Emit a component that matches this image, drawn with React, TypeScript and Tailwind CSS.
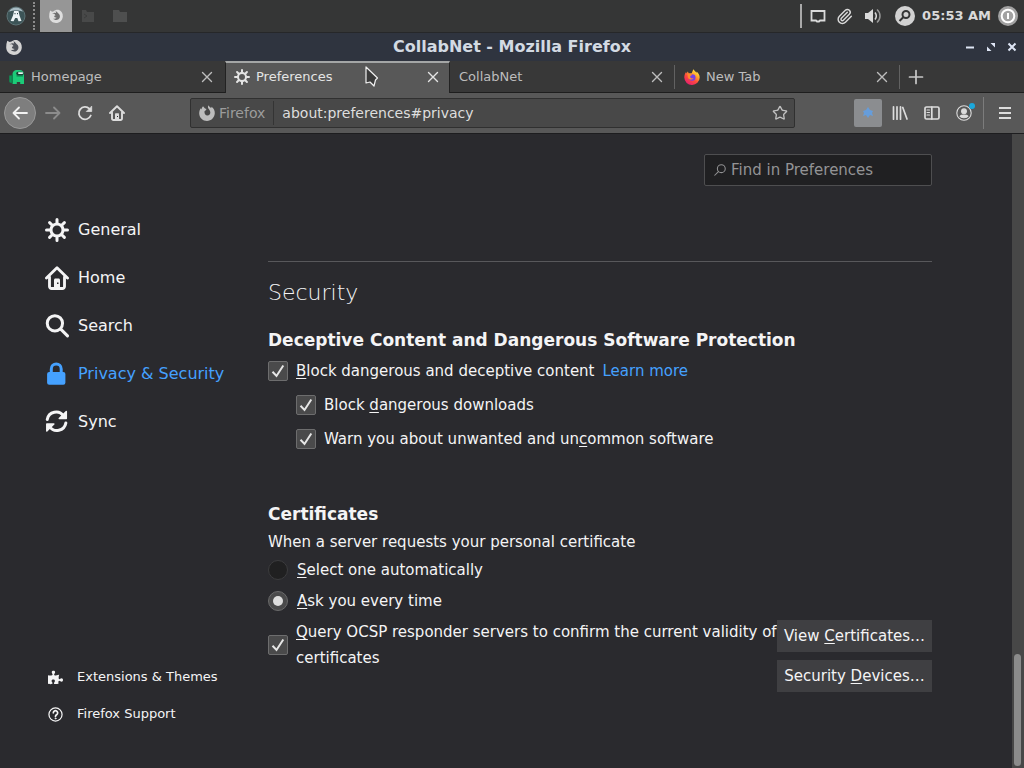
import type { ReactNode, InputHTMLAttributes } from "react";
import { Paperclip, Star } from "lucide-react";
import { FaPuzzlePiece } from "react-icons/fa";

type IconProps = { className?: string };

const GEAR =
  "M15 7h-2.1a4.967 4.967 0 0 0-.732-1.753l1.49-1.49a1 1 0 0 0-1.414-1.414l-1.49 1.49A4.968 4.968 0 0 0 9 3.1V1a1 1 0 0 0-2 0v2.1a4.968 4.968 0 0 0-1.753.732l-1.49-1.49a1 1 0 0 0-1.414 1.415l1.49 1.49A4.967 4.967 0 0 0 3.1 7H1a1 1 0 0 0 0 2h2.1a4.968 4.968 0 0 0 .737 1.763c-.014.013-.032.017-.045.03l-1.45 1.45a1 1 0 1 0 1.414 1.414l1.45-1.45c.013-.013.018-.031.03-.045A4.968 4.968 0 0 0 7 12.9V15a1 1 0 0 0 2 0v-2.1a4.968 4.968 0 0 0 1.753-.732l1.49 1.49a1 1 0 0 0 1.414-1.414l-1.49-1.49A4.967 4.967 0 0 0 12.9 9H15a1 1 0 0 0 0-2zM5 8a3 3 0 1 1 3 3 3 3 0 0 1-3-3z";

function Line({ className, children, w = 2 }: IconProps & { children: ReactNode; w?: number }) {
  return (
    <svg
      viewBox="0 0 16 16"
      className={className}
      fill="none"
      stroke="currentColor"
      strokeWidth={w}
      strokeLinecap="round"
      strokeLinejoin="round"
      aria-hidden="true"
    >
      {children}
    </svg>
  );
}

const GearIcon = ({ className }: IconProps) => (
  <svg viewBox="0 0 16 16" className={className} fill="currentColor" aria-hidden="true">
    <path d={GEAR} />
  </svg>
);

const HomeIcon = ({ className }: IconProps) => (
  <Line className={className} w={1.9}>
    <path d="M1 8 8 1.2 15 8" />
    <path d="M3 7.5v6.1A1.4 1.4 0 0 0 4.4 15h7.2a1.4 1.4 0 0 0 1.4-1.4V7.5" />
    <path d="M6 15V9.3c0-.6.4-1 1-1h2c.6 0 1 .4 1 1V15z" fill="currentColor" stroke="none" />
    <rect x="8" y="11" width="1" height="1" fill="#2a2a2e" stroke="none" />
  </Line>
);

const SearchIcon = ({ className }: IconProps) => (
  <Line className={className}>
    <circle cx="6.6" cy="6.2" r="5.1" />
    <path d="m10.5 10.1 4.5 4.5" />
  </Line>
);

const LockIcon = ({ className }: IconProps) => (
  <svg viewBox="0 0 16 16" className={className} fill="currentColor" aria-hidden="true">
    <path d="M12.200 6.600h-.4V4.600a4.300 4.300 0 0 0-8.600 0v2h-.4A1.400 1.400 0 0 0 1.400 8v5.800a1.400 1.400 0 0 0 1.400 1.400h9.400a1.400 1.400 0 0 0 1.400-1.400V8a1.400 1.400 0 0 0-1.400-1.400zM5.200 6.600v-2a2.300 2.300 0 0 1 4.600 0v2z" />
  </svg>
);

const SyncIcon = ({ className }: IconProps) => (
  <Line className={className}>
    <path d="M1.500 6.300A6 6 0 0 1 12.400 4" />
    <path d="M13.900 8.700A6 6 0 0 1 3 11" />
    <path d="M14.200 1v4.700H9.500z" fill="currentColor" strokeWidth="1" />
    <path d="M1.200 14V9.300h4.700z" fill="currentColor" strokeWidth="1" />
  </Line>
);

const HelpIcon = ({ className }: IconProps) => (
  <Line className={className} w={1.3}>
    <circle cx="8" cy="8" r="7" />
    <path d="M5.700 6.200a2.300 2.300 0 1 1 3.700 1.900C8.600 8.700 8 9 8 10" strokeWidth="1.800" />
    <circle cx="8" cy="12.200" r=".5" strokeWidth="1" />
  </Line>
);

const CloseIcon = ({ className }: IconProps) => (
  <Line className={className} w={1.4}>
    <path d="m3.500 3.500 9 9m0-9-9 9" />
  </Line>
);

/* Ring-shaped fox used in the address bar. */
const FlameIcon = ({ className }: IconProps) => (
  <svg viewBox="0 0 16 16" className={className} fill="currentColor" aria-hidden="true">
    <path d="M4 1.200 6 3.600 7.500 4 6.800 5.200 5.500 6.200C5.200 8.800 6.500 10.600 8.500 10.500c1.800-.1 3-1.500 2.800-3.300C11.100 5.400 9.900 4.300 9.200 3.200 8.800 2.400 8.900 1.300 9.500.300c.3 1.300 1.500 1.900 2.800 2.700l.2-1.200C14.700 3.200 15.900 5.500 15.800 8.200 15.600 12.600 12.200 15.900 8 15.900S.300 12.600.200 8.400C.2 6.400.8 4.600 1.800 3.200l.5 1.300C2.600 3.200 3.200 2.100 4 1.200z" />
  </svg>
);

/* Solid fox over a globe used by the window list and the title bar. */
const FoxIcon = ({ className, inner }: IconProps & { inner: string }) => (
  <svg viewBox="0 0 16 16" className={className} aria-hidden="true">
    <path
      fill="currentColor"
      d="M1.300 1.800 3.600 3 5.500 2.600C7 1 9.500.500 11.500 1.200 14.300 2.400 16 5.200 15.800 8.500 15.600 12.700 12.200 16 8 16S.300 12.800.200 8.600C.100 6.300.500 4 1.300 1.800z"
    />
    <path
      fill={inner}
      d="M7.500 2.300c2.200 1 2.300 2.300 4.200 3.700 1.500 2.200.800 4.800-1.200 6-2 1-4.700.5-5.700-1.200 1.500.5 2.900.1 3.900-.8L6.500 9.500 5.800 8l1.700-1L6 5.300 3.500 5.200l2.800-.9 1.900.2z"
    />
  </svg>
);

const FirefoxLogo = ({ className }: IconProps) => (
  <svg viewBox="0 0 16 16" className={className} aria-hidden="true">
    <defs>
      <linearGradient id="flame" x1=".85" y1="0" x2=".2" y2="1">
        <stop offset="0" stopColor="#fff44f" />
        <stop offset=".3" stopColor="#ffb02e" />
        <stop offset=".6" stopColor="#ff4a3d" />
        <stop offset="1" stopColor="#e21a75" />
      </linearGradient>
    </defs>
    <path
      fill="url(#flame)"
      d="M9.500.3c.8 1.600 2.200 2.500 3.200 3.500.1-.5 0-.9-.2-1.300 2 1.400 3.200 3.700 3.200 6A7.600 7.600 0 0 1 8 16 7.600 7.600 0 0 1 .3 8.600C.2 6.200 1.100 4.200 2.100 3l.4 1.400 1.300-2 .9 1.800 3 .1C8.300 3 8.600 1.500 9.500.3z"
    />
    <circle cx="8.200" cy="8.500" r="3.300" fill="#7542e5" />
    <path fill="#ff8a2b" d="M3.500 5c2-.3 3.800-.2 5 .7-.9.900-2.200.7-2.300 1.900C6 9 7.500 10 9.500 9c-.9 2.200-4.800 2.200-5.700-.8z" />
  </svg>
);

const CrewmateLogo = ({ className }: IconProps) => (
  <svg viewBox="0 0 16 16" className={className} aria-hidden="true">
    <path fill="#0a9a58" d="M.3 6.500h3.200v7.300H1.800a1.500 1.500 0 0 1-1.500-1.500z" />
    <path fill="#1ccb78" d="M3.500 5.200A4.200 4.200 0 0 1 7.700 1h3.100A4.200 4.200 0 0 1 15 5.200V15h-3.800v-2H7.800v2H3.500z" />
    <path fill="#0d7c4c" d="M2.600 5.500h1.200v9H2.600zM7.500 6.200h6.500v1.200H7.500z" />
    <rect x="7.200" y="2.800" width="7.600" height="3.400" rx="1.700" fill="#1c3f35" />
    <rect x="9" y="3.200" width="5.200" height="1.700" rx=".8" fill="#e4fff4" />
  </svg>
);

function Tab({ icon, title, active, divider }: { icon?: ReactNode; title: string; active?: boolean; divider?: boolean }) {
  return (
    <div
      className={
        active
          ? "flex w-[225px] items-center border-x border-t-2 border-x-[#222] border-t-[#a4a6a6] bg-[#585858] px-2 pb-[2px] text-[#e4e4e4]"
          : "flex w-[225px] items-center border-b border-b-[#1e1e1e] pl-[9px] text-[#bdbdbd]"
      }
    >
      <button type="button" role="tab" aria-selected={!!active} className="flex flex-1 items-center gap-[6px] text-left text-[13px]">
        {icon}
        {title}
      </button>
      <button type="button" aria-label={"Close " + title} className={active ? "" : divider ? "mr-[9px]" : "mr-[10px]"}>
        <CloseIcon className="size-4" />
      </button>
      {divider ? <span className="h-6 w-px bg-[#626262]" /> : null}
    </div>
  );
}

function CheckBox(props: InputHTMLAttributes<HTMLInputElement>) {
  return (
    <span className="grid shrink-0">
      <input
        type="checkbox"
        defaultChecked
        {...props}
        className="peer col-start-1 row-start-1 size-5 appearance-none rounded-xs border border-[#6d6d6e] bg-[#4a4a4b]"
      />
      <svg
        viewBox="0 0 20 20"
        className="pointer-events-none invisible col-start-1 row-start-1 size-5 peer-checked:visible"
        fill="none"
        stroke="#e6e6e6"
        strokeWidth="2"
        aria-hidden="true"
      >
        <path d="m4.500 10.800 4 4.200L15.300 4.500" />
      </svg>
    </span>
  );
}

function Radio(props: InputHTMLAttributes<HTMLInputElement>) {
  return (
    <span className="grid shrink-0 place-items-center">
      <input
        type="radio"
        {...props}
        className="peer col-start-1 row-start-1 size-5 appearance-none rounded-full border border-[#3c3c3e] bg-[#202021] checked:border-[#6a6a6b] checked:bg-[#4a4a4b]"
      />
      <span className="pointer-events-none invisible col-start-1 row-start-1 size-[10px] rounded-full bg-[#dedede] peer-checked:visible" />
    </span>
  );
}

const K = ({ children }: { children: ReactNode }) => (
  <span className="underline decoration-1 underline-offset-2">{children}</span>
);

const categories = [
  { name: "General", Icon: GearIcon },
  { name: "Home", Icon: HomeIcon },
  { name: "Search", Icon: SearchIcon },
  { name: "Privacy & Security", Icon: LockIcon, current: true },
  { name: "Sync", Icon: SyncIcon },
];

function Panel() {
  return (
    <div className="flex h-8 shrink-0 items-center bg-[#353636]">
      <button type="button" aria-label="Applications" className="ml-[6px]">
        <svg viewBox="0 0 20 20" className="size-5" aria-hidden="true">
          <circle cx="10" cy="10" r="9" fill="#3c5457" stroke="#5d7376" />
          <path d="M3 5.500c3-5.500 11-5.500 14 0-3-1.500-11-1.500-14 0z" fill="#a9bcc4" />
          <path d="M8 5h4.500l1 4.500 2 5.500-3 .3L11.300 12H9.200l-1.600 3.300-3-.3L7 9.500z" fill="#edf4f6" />
          <path d="M8.500 7h1v1.200h-1zM11 7h1v1.200h-1z" fill="#31484c" />
        </svg>
      </button>
      <span className="ml-[7px] h-7 border-l-2 border-dotted border-[#8b8b8b]" />
      <button type="button" aria-label="Firefox window" className="ml-[5px] grid h-8 w-8 place-items-center bg-[#969696] text-[#dedede]">
        <FoxIcon className="size-[14px]" inner="#6f6f6f" />
      </button>
      <button type="button" aria-label="Terminal" className="ml-[9px] text-[#484949]">
        <svg viewBox="0 0 14 14" className="size-[14px]" fill="currentColor" aria-hidden="true">
          <path d="M1 1h4l1 2h7v10H1z" />
          <path d="m3 5 3 2-3 2" stroke="#3b3c3c" fill="none" />
        </svg>
      </button>
      <button type="button" aria-label="Files" className="ml-[17px] text-[#4e4f4f]">
        <svg viewBox="0 0 16 14" className="h-[14px] w-4" fill="currentColor" aria-hidden="true">
          <path d="M1 1h6l1 2h7v10H1z" />
        </svg>
      </button>
      <div className="ml-auto flex items-center pr-[6px] text-[#dadada]">
        <span className="h-6 w-[2px] bg-[#a9a9a9]" />
        <Line className="ml-2 size-4">
          <path d="M1.500 3h13v9.500H10l-1 1H7l-1-1H1.500z" strokeWidth="1.800" strokeLinejoin="miter" />
        </Line>
        <Paperclip className="ml-[10px] size-[17px]" strokeWidth={2} />
        <svg viewBox="0 0 16 16" className="ml-3 size-4" fill="currentColor" aria-hidden="true">
          <path d="M0 5h3l5-4v14l-5-4H0z" />
          <path d="M10 4.500c1.500 2 1.500 5 0 7" fill="none" stroke="currentColor" strokeWidth="1.500" />
          <path d="M12 1.500c4 3.500 4 9.500 0 13" fill="none" stroke="#999" strokeWidth="1.500" />
        </svg>
        <svg viewBox="0 0 20 20" className="ml-[14px] size-5" aria-hidden="true">
          <circle cx="10" cy="10" r="10" fill="#d2d2d2" />
          <g fill="none" stroke="#353636" strokeWidth="2">
            <circle cx="11" cy="8.500" r="3.500" />
            <path d="m8.500 11-4 4" />
          </g>
        </svg>
        <time className="ml-[7px] text-[13px] font-bold">05:53 AM</time>
        <button type="button" aria-label="Power" className="ml-[7px]">
          <svg viewBox="0 0 20 20" className="size-5" aria-hidden="true">
            <circle cx="10" cy="10" r="10" fill="#a2a2a2" />
            <circle cx="10" cy="10" r="6.300" fill="none" stroke="#fff" strokeWidth="2" />
            <path d="M10 7v6" stroke="#fff" strokeWidth="2" />
          </svg>
        </button>
      </div>
    </div>
  );
}

function TitleBar() {
  return (
    <header className="flex h-[29px] shrink-0 items-center border-t border-[#262729] bg-[#2f343f] px-[6px] pb-px">
      <div className="w-16 text-[#d3d3d3]">
        <FoxIcon className="size-4" inner="#4d5159" />
      </div>
      <h1 className="flex-1 text-center text-[16px] leading-6 font-bold text-[#d3dae3]">CollabNet - Mozilla Firefox</h1>
      <div className="flex w-16 justify-end gap-[9px] text-[#dfe6f5]">
        <button type="button" aria-label="Minimize">
          <svg viewBox="0 0 12 12" className="size-3" aria-hidden="true">
            <path d="M2 6.500h8" stroke="currentColor" strokeWidth="2" />
          </svg>
        </button>
        <button type="button" aria-label="Restore">
          <svg viewBox="0 0 12 12" className="size-3" fill="currentColor" aria-hidden="true">
            <path d="M5.500 2H10v4.500zM2 5.500V10h4.500z" />
          </svg>
        </button>
        <button type="button" aria-label="Close window">
          <svg viewBox="0 0 12 12" className="size-3" aria-hidden="true">
            <path d="m2.500 2.500 7 7m0-7-7 7" stroke="currentColor" strokeWidth="2" />
          </svg>
        </button>
      </div>
    </header>
  );
}

function NavBar() {
  return (
    <div className="flex h-[41px] shrink-0 items-center border-b border-[#1d1d1f] bg-[#585858] text-[#dcdcdc]">
      <button type="button" aria-label="Back" className="ml-1 grid size-8 shrink-0 place-items-center rounded-full border border-[#999] bg-[#7e7e7e] text-[#f2f2f2]">
        <Line className="size-4" w={1.8}>
          <path d="M15 8H1.500M7 2.500 1.500 8 7 13.500" />
        </Line>
      </button>
      <button type="button" aria-label="Forward" className="ml-[9px] text-[#8c8c8c]">
        <Line className="size-4" w={1.8}>
          <path d="M1 8h13.500M9 2.500 14.500 8 9 13.500" />
        </Line>
      </button>
      <button type="button" aria-label="Reload" className="ml-4">
        <Line className="size-4" w={1.8}>
          <path d="M13.800 10.500A6.200 6.200 0 1 1 12.500 3.800" />
          <path d="M14.700 1.500v5H9.700z" fill="currentColor" strokeWidth=".8" />
        </Line>
      </button>
      <button type="button" aria-label="Home page" className="ml-4">
        <HomeIcon className="size-4" />
      </button>
      <div className="ml-[65px] flex h-[30px] min-w-0 flex-1 items-center rounded-xs border border-[#303030] bg-[#484848]">
        <div className="flex h-6 items-center gap-1 border-r border-[#343434] pr-2 pl-2 text-[14px] text-[#9c9c9c]">
          <FlameIcon className="size-4 text-[#bdbdbd]" />
          Firefox
        </div>
        <input
          aria-label="Address"
          defaultValue="about:preferences#privacy"
          className="min-w-0 flex-1 bg-transparent pl-2 text-[14px] text-[#dedede] outline-none"
        />
        <button type="button" aria-label="Bookmark this page" className="mr-[6px] text-[#c0c0c0]">
          <Star className="size-4" strokeWidth={2} />
        </button>
      </div>
      <div className="ml-[59px] flex items-center">
        <button type="button" aria-label="Extension" className="grid size-7 place-items-center rounded-xs bg-[#8b8d90]">
          <svg viewBox="0 0 12 12" className="size-3" aria-hidden="true">
            <path d="M6 0l2 3 3 1-1 2 1 3-3-1-2 3-2-3-3 1 1-3-1-2 3-1z" fill="#669ddb" />
          </svg>
        </button>
        <button type="button" aria-label="Library" className="ml-[10px]">
          <Line className="size-4" w={1.7}>
            <path d="M1.500 1.800v12.400M5 1.800v12.400M8.500 1.800v12.400M10.800 2.500 15 14" />
          </Line>
        </button>
        <button type="button" aria-label="Sidebars" className="ml-4">
          <Line className="size-4" w={1.7}>
            <rect x="1" y="2" width="14" height="12" rx="1.500" />
            <path d="M7.800 2v12" />
            <path d="M3 5h2.500M3 7.500h2.500M3 10h2.500" strokeWidth="1.100" />
          </Line>
        </button>
        <button type="button" aria-label="Account" className="relative ml-4">
          <Line className="size-4" w={1.1}>
            <circle cx="8" cy="8" r="7.200" />
            <circle cx="8" cy="6.300" r="2.400" fill="currentColor" />
            <path d="M4 11.200c1-1.500 7-1.500 8 0-1.400 2.100-6.600 2.100-8 0z" fill="currentColor" />
          </Line>
          <span className="absolute -top-[2px] -right-[3px] size-[6px] rounded-full bg-[#1ba8dc]" />
        </button>
        <span className="ml-[11px] h-8 w-px bg-[#7c7c7c]" />
        <button type="button" aria-label="Menu" className="mr-[11px] ml-[13px]">
          <Line className="size-4">
            <path d="M2 3h12M2 8h12M2 13h12" strokeLinecap="butt" />
          </Line>
        </button>
      </div>
    </div>
  );
}

export default function App() {
  return (
    <div className="relative flex h-screen min-h-[640px] flex-col overflow-hidden bg-[#2a2a2e] font-['DejaVu_Sans',sans-serif] text-[#f4f4f5]">
      <Panel />
      <TitleBar />
      <div role="tablist" className="flex h-8 shrink-0 bg-[#383838]">
        <Tab icon={<CrewmateLogo className="size-4" />} title="Homepage" />
        <Tab icon={<GearIcon className="size-4" />} title="Preferences" active />
        <Tab title="CollabNet" divider />
        <Tab icon={<FirefoxLogo className="size-4" />} title="New Tab" divider />
        <div className="flex flex-1 items-center border-b border-[#1e1e1e] pl-2">
          <button type="button" aria-label="Open a new tab" className="text-[#c8c8c8]">
            <Line className="size-4" w={1.7}>
              <path d="M8 1.500v13M1.500 8h13" />
            </Line>
          </button>
        </div>
      </div>
      <NavBar />

      <div className="flex min-h-0 flex-1">
        <aside className="flex w-[268px] shrink-0 flex-col pt-[72px] pb-11">
          <nav className="flex flex-col" aria-label="Categories">
            {categories.map(({ name, Icon, current }) => (
              <a
                key={name}
                href="#category"
                className={
                  current
                    ? "flex h-12 items-center gap-[9px] pl-[45px] text-[16px] text-[#45a1ff]"
                    : "flex h-12 items-center gap-[9px] pl-[45px] text-[16px]"
                }
              >
                <Icon className="size-6" />
                {name}
              </a>
            ))}
          </nav>
          <div className="mt-auto flex flex-col gap-[17px] pl-12 text-[13px] leading-5">
            <a href="#extensions" className="flex items-center gap-[14px]">
              <FaPuzzlePiece className="size-[15px]" />
              Extensions &amp; Themes
            </a>
            <a href="#support" className="flex items-center gap-[14px]">
              <HelpIcon className="size-[15px]" />
              Firefox Support
            </a>
          </div>
        </aside>

        <main className="flex min-w-0 flex-1 flex-col overflow-hidden pt-5">
          <div className="flex w-full max-w-[664px] flex-col text-[15px] leading-[26px]">
            <label className="flex h-8 w-[228px] items-center gap-1 self-end rounded-xs border border-[#4e4e50] bg-[#202022] px-2 text-[#939395]">
              <Line className="size-[14px] -scale-x-100" w={1.2}>
                <circle cx="6.500" cy="6.500" r="4.500" />
                <path d="m9.800 9.800 4.200 4.200" />
              </Line>
              <input
                type="search"
                aria-label="Find in Preferences"
                placeholder="Find in Preferences"
                className="min-w-0 flex-1 bg-transparent outline-none placeholder:text-[#939395]"
              />
            </label>
            <hr className="mt-[75px] border-[#58585b]" />
            <h2 className="mt-[15px] text-[22px] leading-8 font-extralight">Security</h2>
            <h3 className="mt-[19px] text-[17px] leading-6 font-bold">Deceptive Content and Dangerous Software Protection</h3>
            <div className="mt-[2px] flex h-[34px] items-center">
              <label className="flex items-center gap-2">
                <CheckBox />
                <span>
                  <K>B</K>lock dangerous and deceptive content
                </span>
              </label>
              <a href="#learn" className="ml-2 text-[#45a1ff]">
                Learn more
              </a>
            </div>
            <label className="ml-7 flex h-[34px] items-center gap-2">
              <CheckBox />
              <span>
                Block <K>d</K>angerous downloads
              </span>
            </label>
            <label className="ml-7 flex h-[34px] items-center gap-2">
              <CheckBox />
              <span>
                Warn you about unwanted and un<K>c</K>ommon software
              </span>
            </label>

            <h3 className="mt-[46px] text-[17px] leading-6 font-bold">Certificates</h3>
            <p className="mt-1 leading-6">When a server requests your personal certificate</p>
            <label className="flex h-[31px] items-center gap-[9px]">
              <Radio name="certificate" />
              <span>
                <K>S</K>elect one automatically
              </span>
            </label>
            <label className="flex h-[31px] items-center gap-[9px]">
              <Radio name="certificate" defaultChecked />
              <span>
                <K>A</K>sk you every time
              </span>
            </label>
            <div className="mt-[3px] flex items-start">
              <label className="flex min-w-0 flex-1 items-center gap-2">
                <CheckBox />
                <span>
                  <K>Q</K>uery OCSP responder servers to confirm the current validity of certificates
                </span>
              </label>
              <div className="mt-px flex w-[155px] shrink-0 flex-col gap-2">
                <button type="button" className="h-8 bg-[#3f3f42]">
                  View <K>C</K>ertificates…
                </button>
                <button type="button" className="h-8 bg-[#3f3f42]">
                  Security <K>D</K>evices…
                </button>
              </div>
            </div>
          </div>
        </main>

        <div className="flex w-3 shrink-0 flex-col justify-end bg-[#474747] p-[2px] pr-[3px]">
          <div className="h-[112px] rounded-full bg-[#8b8b8b]" />
        </div>
      </div>

      <svg viewBox="0 0 14 22" className="pointer-events-none absolute top-[65px] left-[364px] h-[22px] w-[14px]" aria-hidden="true">
        <path d="M2 2v16l4-1 4 4 1.500-6 2-2z" fill="#3a3a3a" stroke="#f0f0f0" strokeWidth="1.200" strokeLinejoin="round" />
      </svg>
    </div>
  );
}
